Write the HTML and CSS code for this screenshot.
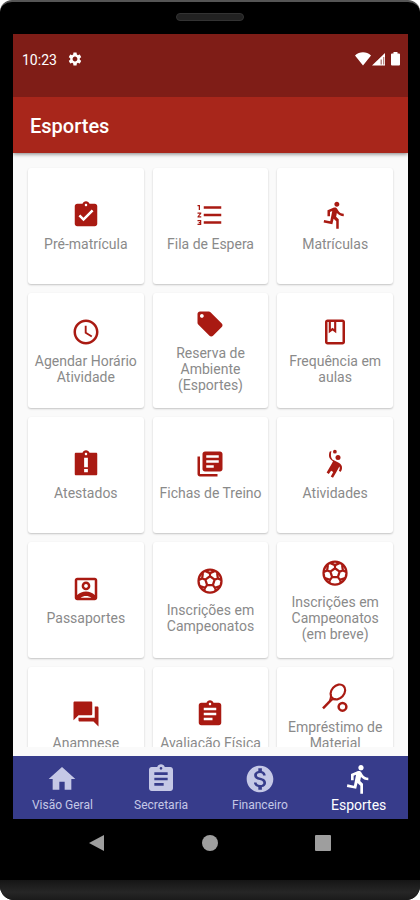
FILE: index.html
```
<!DOCTYPE html>
<html lang="pt-BR">
<head>
<meta charset="utf-8">
<meta name="viewport" content="width=device-width, initial-scale=1">
<title>Esportes</title>
<link rel="stylesheet" href="styles.css">
</head>
<body>
<svg class="sprite" aria-hidden="true">
  <symbol id="i-check" viewBox="0 0 24 24"><path d="M19 3h-4.18C14.4 1.84 13.3 1 12 1s-2.4.84-2.82 2H5c-1.100 0-2 .9-2 2v14c0 1.100.9 2 2 2h14c1.100 0 2-.9 2-2V5c0-1.100-.9-2-2-2zm-7 0c.55 0 1 .45 1 1s-.45 1-1 1-1-.45-1-1 .45-1 1-1zm-2 14l-4-4 1.410-1.410L10 14.170l6.590-6.590L18 9l-8 8z"/></symbol>
  <symbol id="i-late" viewBox="0 0 24 24"><path d="M19 3h-4.180C14.400 1.840 13.300 1 12 1s-2.400.840-2.820 2H4c-.6 0-1 .4-1 1v16c0 .6.4 1 1 1h16c.6 0 1-.4 1-1V4c0-.6-.4-1-1-1zm-5.500 15.500h-3v-2.500h3v2.500zm0-4h-3V7h3v7.500zM12 5c-.55 0-1-.45-1-1s.45-1 1-1 1 .45 1 1-.45 1-1 1z"/></symbol>
  <symbol id="i-assignment" viewBox="0 0 24 24"><path d="M19 3h-4.18C14.4 1.84 13.3 1 12 1s-2.4.84-2.82 2H5c-1.100 0-2 .9-2 2v14c0 1.100.9 2 2 2h14c1.100 0 2-.9 2-2V5c0-1.100-.9-2-2-2zm-7 0c.55 0 1 .45 1 1s-.45 1-1 1-1-.45-1-1 .45-1 1-1zm2 14H7v-2h7v2zm3-4H7v-2h10v2zm0-4H7V7h10v2z"/></symbol>
  <symbol id="i-list" viewBox="0 0 24 24"><path d="M2 17h2v.5H3v1h1v.5H2v1h3v-4H2v1zm1-9h1V4H2v1h1v3zm-1 3h1.800L2 13.100v.9h3v-1H3.200L5 10.900V10H2v1zm5-6v2h14V5H7zm0 14h14v-2H7v2zm0-6h14v-2H7v2z"/></symbol>
  <symbol id="i-run" viewBox="0 0 24 24"><path d="M13.490 5.480c1.100 0 2-.9 2-2s-.9-2-2-2-2 .9-2 2 .9 2 2 2zm-3.600 13.900l1-4.400 2.100 2v6h2v-7.500l-2.100-2 .6-3c1.300 1.500 3.300 2.500 5.500 2.500v-2c-1.900 0-3.500-1-4.300-2.400l-1-1.600c-.4-.6-1-1-1.700-1-.3 0-.5.1-.8.1l-5.200 2.200v4.700h2v-3.400l1.800-.7-1.600 8.100-4.900-1-.4 2 7 1.400z"/></symbol>
  <symbol id="i-clock" viewBox="0 0 24 24"><path d="M11.990 2C6.470 2 2 6.480 2 12s4.470 10 9.990 10C17.520 22 22 17.520 22 12S17.520 2 11.990 2zM12 20c-4.420 0-8-3.580-8-8s3.580-8 8-8 8 3.580 8 8-3.580 8-8 8zm.5-13H11v6l5.250 3.150.75-1.230-4.500-2.670z"/></symbol>
  <symbol id="i-tag" viewBox="0 0 24 24"><path d="M21.410 11.580l-9-9C12.050 2.220 11.550 2 11 2H4c-1.100 0-2 .9-2 2v7c0 .55.220 1.050.590 1.420l9 9c.36.36.86.58 1.410.58s1.050-.22 1.410-.59l7-7c.37-.36.59-.86.59-1.410s-.23-1.060-.59-1.420zM5.500 7C4.670 7 4 6.330 4 5.500S4.670 4 5.500 4 7 4.670 7 5.500 6.330 7 5.500 7z"/></symbol>
  <symbol id="i-book" viewBox="0 0 24 24"><path fill-rule="evenodd" d="M18 2H6c-1.100 0-2 .9-2 2v16c0 1.100.9 2 2 2h12c1.100 0 2-.9 2-2V4c0-1.100-.9-2-2-2zm0 18H6V4h1v9l3-2.300 3 2.300V4h5v16zM8.700 4h2.600v5.500L10 8.500l-1.300 1z"/></symbol>
  <symbol id="i-library" viewBox="0 0 24 24"><path d="M4 6H2v14c0 1.100.9 2 2 2h14v-2H4V6zm16-4H8c-1.100 0-2 .9-2 2v12c0 1.100.9 2 2 2h12c1.100 0 2-.9 2-2V4c0-1.100-.9-2-2-2zm-1 9H9V9h10v2zm-4 4H9v-2h6v2zm4-8H9V5h10v2z"/></symbol>
  <symbol id="i-handball" viewBox="0 0 24 24"><circle cx="14.400" cy="6.700" r="2"/><circle cx="11.900" cy="2.100" r="1.500"/><path d="M7.700 2.200 9.100 1.500C8.500 4.500 8.500 6.600 9.900 8.300L15 11c1.700 1 2.700 2.200 2.600 4.200 0 1.200-.4 2.300-1.300 3.200l-1.300-1.200c.8-.9 1-2.100.5-3.300l-2.600 4.900-2.500 4.100-1.800-1 2-3.600-1.700-.9-1.900 2.500-1.700-1.200 4.200-7.200.9-1.800C7.200 7.900 6.600 5.800 7.700 2.200z"/></symbol>
  <symbol id="i-account" viewBox="0 0 24 24"><path d="M19 3H5c-1.110 0-2 .9-2 2v14c0 1.100.89 2 2 2h14c1.100 0 2-.9 2-2V5c0-1.100-.9-2-2-2zm0 2v11.800C17.200 15.100 14.700 14 12 14s-5.200 1.100-7 2.800V5h14zM7.700 19c1.200-.9 2.700-1.400 4.300-1.400s3.100.5 4.300 1.400H7.700zM12 13c1.930 0 3.500-1.570 3.500-3.500S13.930 6 12 6 8.500 7.570 8.500 9.500 10.070 13 12 13zm0-5c.83 0 1.500.67 1.500 1.500S12.830 11 12 11s-1.500-.67-1.500-1.500S11.170 8 12 8z"/></symbol>
  <symbol id="i-ball" viewBox="0 0 24 24"><g fill="none" stroke="currentColor" stroke-width="1.800" stroke-linejoin="round"><circle cx="12" cy="12" r="9.200"/><path d="M12 8.200l3.700 2.700-1.400 4.400H9.700l-1.400-4.400zM12 8.200V5.500M15.700 10.900l2.600-.9M14.300 15.300l1.700 2.200M9.700 15.300L8 17.500M8.300 10.900L5.700 10M8 3.900l4 1.800 4-1.800M20.900 11.100L18.300 10l-.6-4.400M16.800 19.800L16 17.500l4.600-1.600M7.200 19.800L8 17.500l-4.600-1.600M3.100 11.100L5.700 10l.6-4.400"/></g></symbol>
  <symbol id="i-forum" viewBox="0 0 24 24"><path d="M21 6h-2v9H6v2c0 .55.45 1 1 1h11l4 4V7c0-.55-.45-1-1-1zm-4 6V3c0-.55-.45-1-1-1H3c-.55 0-1 .45-1 1v14l4-4h10c.55 0 1-.45 1-1z"/></symbol>
  <symbol id="i-tennis" viewBox="0 0 24 24"><g fill="none" stroke="currentColor"><ellipse cx="14.300" cy="7.200" rx="6.600" ry="5.100" stroke-width="1.700" transform="rotate(-48 14.300 7.200)"/><path stroke-width="2" d="M9.600 12.900L2.400 20.300"/><path stroke-width="1.300" d="M8.700 8.900c.1 2.200-.1 3-.7 4.700 1.700-.7 2.800-.8 5-.7"/><circle cx="18" cy="19" r="3.100" stroke-width="2"/></g></symbol>
  <symbol id="i-home" viewBox="0 0 24 24"><path d="M10 20v-6h4v6h5v-8h3L12 3 2 12h3v8z"/></symbol>
  <symbol id="i-money" viewBox="0 0 24 24"><path d="M12 2C6.480 2 2 6.480 2 12s4.480 10 10 10 10-4.480 10-10S17.520 2 12 2zm1.410 16.090V20h-2.670v-1.930c-1.710-.36-3.160-1.460-3.270-3.400h1.960c.1 1.050.82 1.870 2.650 1.870 1.960 0 2.400-.98 2.400-1.590 0-.83-.44-1.610-2.670-2.140-2.480-.6-4.180-1.620-4.180-3.670 0-1.720 1.390-2.840 3.110-3.210V4h2.670v1.950c1.860.45 2.790 1.860 2.850 3.390H14.300c-.05-1.110-.64-1.870-2.220-1.870-1.500 0-2.400.68-2.400 1.640 0 .84.65 1.390 2.670 1.910s4.180 1.390 4.180 3.910c-.01 1.830-1.380 2.830-3.120 3.160z"/></symbol>
  <symbol id="i-gear" viewBox="0 0 24 24"><path d="M19.140 12.940c.04-.3.06-.61.06-.94s-.02-.64-.07-.94l2.030-1.580c.18-.14.23-.41.12-.61l-1.920-3.320c-.12-.22-.37-.29-.59-.22l-2.390.96c-.5-.38-1.030-.7-1.620-.94l-.36-2.540c-.04-.24-.24-.41-.48-.41h-3.840c-.24 0-.43.17-.47.41l-.36 2.540c-.59.24-1.130.57-1.620.94l-2.390-.96c-.22-.08-.47 0-.59.22L2.740 8.870c-.12.21-.08.47.12.61l2.030 1.580c-.05.3-.09.63-.09.94s.02.64.07.94l-2.030 1.580c-.18.14-.23.41-.12.61l1.920 3.320c.12.22.37.29.59.22l2.390-.96c.5.38 1.030.7 1.620.94l.36 2.540c.05.24.24.41.48.41h3.840c.24 0 .44-.17.47-.41l.36-2.540c.59-.24 1.130-.56 1.620-.94l2.390.96c.22.08.47 0 .59-.22l1.920-3.320c.12-.22.07-.47-.12-.61l-2.010-1.580zM12 15.600c-1.980 0-3.600-1.620-3.600-3.600s1.620-3.600 3.600-3.600 3.600 1.620 3.600 3.600-1.620 3.600-3.600 3.600z"/></symbol>
</svg>

<div class="phone">
  <div class="speaker"></div>
  <div class="screen">
    <div class="status">
      <span class="time">10:23</span>
      <svg class="gear"><use href="#i-gear"/></svg>
      <svg class="signals" viewBox="0 0 46 16"><path fill="#fff" d="M0 4.500C4.500.3 11.500.3 16 4.500L8 14.500zM17 14.500L30 2v12.500z"/><path fill="#b98783" d="M25.500 8.500h1.500v5h-1.500zM28 6h1.300v7.500H28z"/><path fill="#fff" d="M36 3.500q0-1 1-1h1.500V1h4v1.500H44q1 0 1 1v10q0 1-1 1h-7q-1 0-1-1z"/></svg>
    </div>
    <header class="appbar"><h1>Esportes</h1></header>
    <main class="content">
      <div class="grid">
        <a class="card" href="#"><svg><use href="#i-check"/></svg><span>Pré-matrícula</span></a>
        <a class="card" href="#"><svg><use href="#i-list"/></svg><span>Fila de Espera</span></a>
        <a class="card" href="#"><svg><use href="#i-run"/></svg><span>Matrículas</span></a>
        <a class="card" href="#"><svg><use href="#i-clock"/></svg><span>Agendar Horário Atividade</span></a>
        <a class="card" href="#"><svg><use href="#i-tag"/></svg><span>Reserva de Ambiente (Esportes)</span></a>
        <a class="card" href="#"><svg><use href="#i-book"/></svg><span>Frequência em aulas</span></a>
        <a class="card" href="#"><svg><use href="#i-late"/></svg><span>Atestados</span></a>
        <a class="card" href="#"><svg><use href="#i-library"/></svg><span>Fichas de Treino</span></a>
        <a class="card" href="#"><svg><use href="#i-handball"/></svg><span>Atividades</span></a>
        <a class="card" href="#"><svg><use href="#i-account"/></svg><span>Passaportes</span></a>
        <a class="card" href="#"><svg><use href="#i-ball"/></svg><span>Inscrições em Campeonatos</span></a>
        <a class="card" href="#"><svg><use href="#i-ball"/></svg><span>Inscrições em Campeonatos (em breve)</span></a>
        <a class="card" href="#"><svg><use href="#i-forum"/></svg><span>Anamnese</span></a>
        <a class="card" href="#"><svg><use href="#i-assignment"/></svg><span>Avaliação Física</span></a>
        <a class="card card-tall" href="#"><svg><use href="#i-tennis"/></svg><span>Empréstimo de Material</span></a>
      </div>
    </main>
    <nav class="tabs">
      <a class="tab" href="#"><svg><use href="#i-home"/></svg><span>Visão Geral</span></a>
      <a class="tab" href="#"><svg><use href="#i-assignment"/></svg><span>Secretaria</span></a>
      <a class="tab" href="#"><svg><use href="#i-money"/></svg><span>Financeiro</span></a>
      <a class="tab active" href="#" aria-current="page"><svg><use href="#i-run"/></svg><span>Esportes</span></a>
    </nav>
  </div>
  <div class="system">
    <button type="button" aria-label="Voltar"><svg viewBox="0 0 16 16"><path d="M0 8L15 0v16z"/></svg></button>
    <button type="button" aria-label="Início"><svg viewBox="0 0 16 16"><circle cx="8" cy="8" r="8"/></svg></button>
    <button type="button" aria-label="Recentes"><svg viewBox="0 0 16 16"><rect width="16" height="16" rx="1"/></svg></button>
  </div>
  <div class="chin"></div>
</div>
</body>
</html>
```
FILE: styles.css
```
* { box-sizing: border-box; }

body {
  margin: 0;
  background: #fff;
  font-family: Roboto, "Liberation Sans", sans-serif;
}

a { color: inherit; text-decoration: none; }
svg { display: block; fill: currentColor; }
.sprite { display: none; }

.phone {
  display: flex;
  flex-direction: column;
  height: 100vh;
  background: #000;
  border-top: 2px solid #555;
  border-radius: 12px 12px 14px 14px;
  overflow: hidden;
}

.speaker {
  flex: none;
  width: 68px;
  height: 8px;
  margin: 11px auto 13px;
  border: 1px solid #333;
  border-radius: 4px;
  background: #222;
}

.screen {
  flex: 1;
  min-height: 0;
  display: flex;
  flex-direction: column;
  margin: 0 12px 0 13px;
  background: #fafafa;
}

.status {
  position: relative;
  z-index: 1;
  display: flex;
  align-items: flex-start;
  height: 63px;
  padding: 17px 7px 0 9px;
  background: #7f1d17;
  color: #fff;
}

.time { font-size: 14px; line-height: 18px; }
.gear { width: 16px; height: 16px; margin: 0 0 0 10px; }
.signals { width: 46px; height: 16px; margin-left: auto; }

.appbar {
  position: relative;
  display: flex;
  align-items: center;
  height: 56px;
  padding: 2px 17px 0;
  background: #a8261b;
  color: #fff;
  box-shadow: 0 1px 4px rgba(0, 0, 0, 0.5);
}

.appbar h1 { margin: 0; font-size: 20px; font-weight: 500; line-height: 24px; }

.content {
  flex: 1;
  min-height: 0;
  overflow: hidden;
  margin-bottom: 9px;
  padding: 15px 15px 0;
}

.grid {
  display: grid;
  grid-template-columns: repeat(3, 1fr);
  gap: 9px;
}

.card {
  display: flex;
  flex-direction: column;
  align-items: center;
  justify-content: center;
  gap: 6px;
  aspect-ratio: 1;
  min-width: 0;
  padding: 0 4px;
  border-radius: 3px;
  background: #fff;
  box-shadow: 0 1px 2px rgba(0, 0, 0, 0.22);
  color: #8a8a8a;
  font-size: 14px;
  line-height: 16px;
  text-align: center;
}

.card svg { flex: none; width: 30px; height: 30px; color: #a91a12; }
.card-tall span { min-height: 48px; }

.tabs {
  display: grid;
  grid-template-columns: repeat(4, 1fr);
  height: 63px;
  background: #373c8b;
  color: #c5c8e6;
}

.tab {
  display: flex;
  flex-direction: column;
  align-items: center;
  padding-top: 7px;
  font-size: 12px;
  line-height: 18px;
}

.tab svg { width: 32px; height: 32px; margin-bottom: 1px; }
.tab.active { color: #fff; font-size: 14px; }

.system {
  display: grid;
  grid-template-columns: repeat(3, 1fr);
  height: 61px;
  padding: 12px 40px 0;
}

.system button {
  display: flex;
  align-items: center;
  justify-content: center;
  height: 24px;
  padding: 0;
  border: 0;
  background: none;
  color: #9e9e9e;
}

.system svg { width: 16px; height: 16px; }

.chin {
  height: 20px;
  background: linear-gradient(#151515, #262626 60%, #1a1a1a);
}
```
